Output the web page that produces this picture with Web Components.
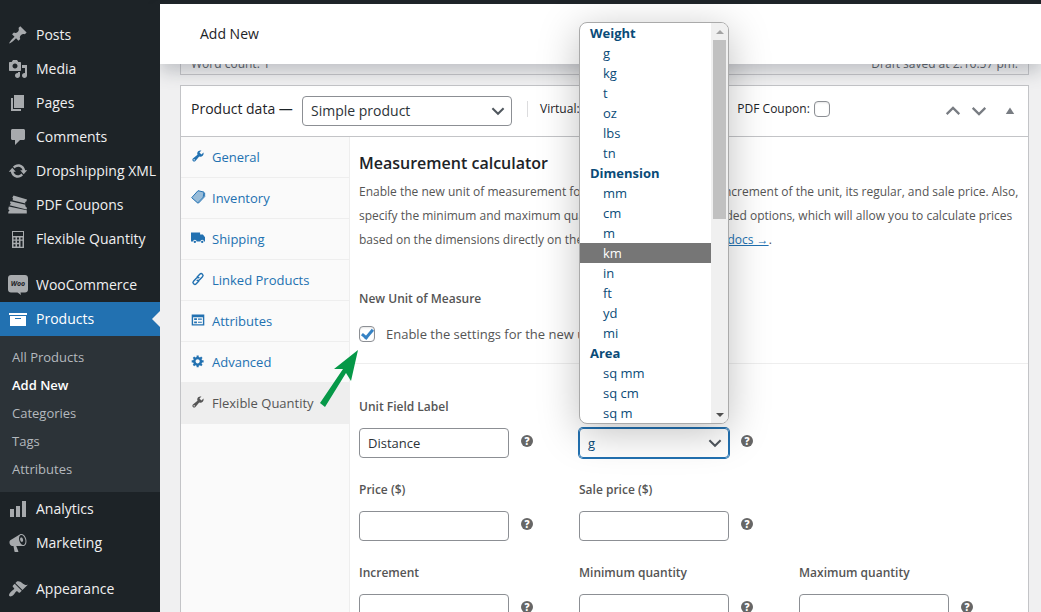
<!DOCTYPE html>
<html lang="en">
<head>
<meta charset="utf-8">
<meta name="viewport" content="width=device-width, initial-scale=1">
<title>Add New product</title>
<style>
body {
    margin: 0;
    overflow: hidden;
    background: #f0f0f1;
    color: #1d2327;
    font: 14px/20px "Open Sans", "Noto Sans", sans-serif;
}
</style>
</head>
<body>

<admin-shell>
    <admin-menu slot="menu">
        <menu-item icon="post">Posts</menu-item>
        <menu-item icon="media">Media</menu-item>
        <menu-item icon="page">Pages</menu-item>
        <menu-item icon="comment">Comments</menu-item>
        <menu-item icon="update">Dropshipping XML</menu-item>
        <menu-item icon="coupons">PDF Coupons</menu-item>
        <menu-item icon="calculator">Flexible Quantity</menu-item>
        <menu-item icon="woo" spaced>WooCommerce</menu-item>
        <menu-item icon="archive" current>Products</menu-item>
        <sub-menu>
            <sub-item>All Products</sub-item>
            <sub-item current>Add New</sub-item>
            <sub-item>Categories</sub-item>
            <sub-item>Tags</sub-item>
            <sub-item>Attributes</sub-item>
        </sub-menu>
        <menu-item icon="chart">Analytics</menu-item>
        <menu-item icon="megaphone">Marketing</menu-item>
        <menu-item icon="brush" spaced>Appearance</menu-item>
    </admin-menu>

    <page-header slot="header">Add New</page-header>

    <editor-status>
        <span>Word count: 1</span>
        <span slot="saved">Draft saved at 2:16:57 pm.</span>
    </editor-status>

    <product-data>
        <data-tab slot="tabs" icon="wrench">General</data-tab>
        <data-tab slot="tabs" icon="tag">Inventory</data-tab>
        <data-tab slot="tabs" icon="truck">Shipping</data-tab>
        <data-tab slot="tabs" icon="link">Linked Products</data-tab>
        <data-tab slot="tabs" icon="list">Attributes</data-tab>
        <data-tab slot="tabs" icon="gear">Advanced</data-tab>
        <data-tab slot="tabs" icon="wrench" current>Flexible Quantity</data-tab>

        <measure-intro></measure-intro>
        <field-grid>
            <text-field label="Unit Field Label" value="Distance"></text-field>
            <unit-field label="Unit of Measure"></unit-field>
            <span></span>
            <text-field label="Price ($)"></text-field>
            <text-field label="Sale price ($)"></text-field>
            <span></span>
            <text-field label="Increment"></text-field>
            <text-field label="Minimum quantity"></text-field>
            <text-field label="Maximum quantity"></text-field>
        </field-grid>
    </product-data>
</admin-shell>

<script>
//all icons sit on a 20x20 grid
const ICONS = {
    post: '<path d="M10.44 3.02l1.82-1.82 6.36 6.35-1.83 1.82c-1.05-.68-2.48-.57-3.41.36l-.75.75c-.92.93-1.04 2.35-.35 3.41l-1.83 1.82-2.41-2.41-2.8 2.79c-.42.42-3.38 2.71-3.8 2.29s1.86-3.39 2.28-3.81l2.79-2.79L4.1 9.36l1.83-1.82c1.05.69 2.48.57 3.4-.36l.75-.75c.93-.92 1.05-2.35.36-3.41z"/>',
    media: '<path d="M13 11V4c0-.55-.45-1-1-1h-1.67L9 1H5L3.67 3H2c-.55 0-1 .45-1 1v7c0 .55.45 1 1 1h10c.55 0 1-.45 1-1zM7 4.5c1.38 0 2.5 1.12 2.5 2.5S8.38 9.5 7 9.5 4.5 8.38 4.5 7 5.62 4.5 7 4.5zM14 6h5v10.5c0 1.38-1.12 2.5-2.5 2.5S14 17.88 14 16.5s1.12-2.5 2.5-2.5c.17 0 .34.02.5.05V9h-3V6zm-4 8.05V13h2v3.5c0 1.38-1.12 2.5-2.5 2.5S7 17.88 7 16.5 8.12 14 9.5 14c.17 0 .34.02.5.05z"/>',
    page: '<path d="M6 15V2h10v13H6zm-1 1h8v2H3V5h2v11z"/>',
    comment: '<path d="M4.5 2h11c.8 0 1.5.7 1.5 1.5v8c0 .8-.7 1.5-1.5 1.5H12l-5 5v-5H4.5C3.700 13 3 12.300 3 11.500v-8C3 2.700 3.700 2 4.500 2z"/>',
    update: '<path d="M10.200 3.280c3.530 0 6.430 2.610 6.920 6h2.080l-3.500 4-3.500-4h2.320c-.450-1.970-2.210-3.450-4.320-3.450-1.450 0-2.730.710-3.540 1.780L4.950 5.660C6.230 4.200 8.110 3.280 10.200 3.280zm-.400 13.440c-3.520 0-6.430-2.610-6.920-6H.800l3.500-4 3.500 4H5.480c.450 1.970 2.210 3.450 4.320 3.450 1.450 0 2.730-.710 3.540-1.780l1.710 1.950c-1.280 1.460-3.150 2.380-5.250 2.380z"/>',
    coupons: '<path d="M5.500.500l13.500 4-.7 2-1.200.400.300 1.600L4.500 5.200l.6-1.500-.800-.900zM2.500 6.200l15 3.500-.3 1.300 1.800 2-.5 1.500L1.500 10.200l1.300-1.500-.8-1.200zM.800 11.500l18 3.800v3.200H.3v-1.800l1.200-1.200L.3 14.300z"/>',
    calculator: '<path fill-rule="evenodd" d="M4 2h12v17H4zM5 3v4h10V3zM5.500 8.500v2h2v-2zm3.500 0v2h2v-2zm3.500 0v2h2v-2zm-7 3.300v2h2v-2zm3.500 0v2h2v-2zm3.500 0v6h2v-6zm-7 3.500v2.200h2v-2.200zm3.500 0v2.200h2v-2.200z"/>',
    woo: '<path d="M3 0h14c1.700 0 3 1.300 3 3v11.500c0 1.700-1.300 3-3 3h-4.500l.5 2.500-3.500-2.500H3c-1.700 0-3-1.300-3-3V3c0-1.700 1.300-3 3-3z"/><text x="10" y="11" text-anchor="middle" font-size="7" font-weight="700" font-style="italic" fill="#1d2327">Woo</text>',
    archive: '<path d="M19 4v2H1V4h18zM2 7h16v10H2V7zm11 3V9H7v1h6z"/>',
    chart: '<path d="M18 18V2h-4v16h4zm-6 0V7H8v11h4zm-6 0v-8H2v8h4z"/>',
    megaphone: '<path d="M18.15 5.94c.46 1.62.38 3.22-.02 4.48-.42 1.28-1.26 2.18-2.3 2.48-.16.06-.26.06-.4.06-.06.02-.12.02-.18.02-.06.02-.14.02-.22.02h-6.8l2.22 5.5c.02.14-.06.26-.14.34-.08.1-.24.16-.34.16H6.95c-.1 0-.26-.06-.34-.16-.08-.08-.16-.2-.14-.34l-1-5.5H4.25l-.02-.02c-.5.06-1.08-.18-1.54-.62s-.88-1.08-1.06-1.88c-.24-.8-.2-1.56-.02-2.2.18-.62.58-1.08 1.06-1.3l.02-.02 9-5.4c.1-.06.18-.1.24-.16.06-.04.14-.08.24-.12.16-.08.28-.12.5-.18 1.04-.3 2.24.1 3.22.98s1.84 2.24 2.26 3.86zm-2.58 5.98h-.02c.4-.1.74-.34 1.04-.7.58-.7.86-1.76.86-3.04 0-.64-.1-1.3-.28-1.98-.34-1.36-1.02-2.5-1.78-3.24s-1.68-1.1-2.46-.88c-.82.22-1.4.96-1.7 2-.32 1.04-.28 2.36.06 3.72.38 1.36 1 2.5 1.8 3.24.78.74 1.62 1.1 2.48.88zm-2.54-7.52c.22-.04.42-.02.62.04.38.16.76.48 1.02 1s.42 1.2.42 1.78c0 .3-.04.56-.12.8-.18.48-.44.84-.86.94-.34.1-.8-.06-1.14-.4s-.64-.86-.78-1.5c-.18-.62-.12-1.24.02-1.72s.48-.84.82-.94z"/>',
    brush: '<path d="M14.48 11.06L7.41 3.99l1.5-1.5c.5-.56 2.3-.47 3.51.32 1.21.8 1.43 1.28 2.91 2.1 1.18.64 2.45 1.26 4.45.85zm-.71.71L6.7 4.7 4.93 6.47c-.39.39-.39 1.02 0 1.41l1.06 1.06c.39.39.39 1.03 0 1.42-.6.6-1.43 1.11-2.21 1.69-.35.26-.7.53-1.01.84C1.43 14.23.4 16.08 1.4 17.07c.99 1 2.84-.03 4.18-1.36.31-.31.58-.66.85-1.02.57-.78 1.08-1.61 1.69-2.21.39-.39 1.02-.39 1.41 0l1.06 1.06c.39.39 1.02.39 1.41 0z"/>',
    wrench: '<path d="M16.68 9.77c-1.34 1.34-3.3 1.67-4.95.99l-5.41 6.52c-.99.99-2.59.99-3.58 0s-.99-2.59 0-3.57l6.52-5.42c-.68-1.65-.35-3.61.99-4.95 1.28-1.28 3.12-1.62 4.72-1.06l-2.89 2.89 2.82 2.82 2.86-2.87c.53 1.58.18 3.39-1.08 4.65zM3.81 16.21c.4.39 1.04.39 1.43 0 .4-.4.4-1.04 0-1.43-.39-.4-1.03-.4-1.43 0-.39.39-.39 1.03 0 1.43z"/>',
    tag: '<path d="M10 1l8.500 2-1 6L9 18.500 1 11z" opacity=".45"/><path fill="none" stroke="currentColor" stroke-width="1.400" d="M10 1l8.500 2-1 7L9.500 18.500 1 11zM9.500 18.500l1.500 0 8.500-9V4"/>',
    truck: '<path d="M0 2h13v3h4l3 4v6h-1.500a2.500 2.500 0 0 0-5 0H8a2.500 2.500 0 0 0-5 0H0z"/><circle cx="5.500" cy="15.500" r="1.700"/><circle cx="16" cy="15.500" r="1.700"/>',
    link: '<g fill="none" stroke="currentColor" stroke-width="2"><path d="M8.500 7.500l4-4.300c2.600-2.600 6.300 1 3.900 3.600L12 11.300c-1.200 1.200-2.800 1.100-3.900 0"/><path d="M11.500 12.500l-4 4.300c-2.600 2.600-6.300-1-3.900-3.600L8 8.700c1.200-1.200 2.800-1.100 3.900 0"/></g>',
    list: '<path fill-rule="evenodd" d="M1 2h18v16H1zM3 6v10h14V6zM4.500 7.500h4V10h-4zm5.500.5h5.500v1.500H10zM4.500 12h4v2.500h-4zm5.500.5h5.500V14H10z"/>',
    gear: '<path d="M18 12h-2.18c-.17.7-.44 1.35-.81 1.93l1.54 1.54-2.1 2.1-1.54-1.54c-.58.36-1.23.63-1.91.79V19H8v-2.18c-.68-.16-1.33-.43-1.91-.79l-1.54 1.54-2.12-2.12 1.54-1.54c-.36-.58-.63-1.23-.79-1.91H1V9.03h2.17c.16-.7.44-1.35.8-1.94L2.43 5.55l2.1-2.1 1.54 1.54c.58-.37 1.24-.64 1.93-.81V2h3v2.18c.68.16 1.33.43 1.91.79l1.54-1.54 2.12 2.12-1.54 1.54c.36.59.64 1.24.8 1.94H18V12zm-8.5 1.5c1.66 0 3-1.34 3-3s-1.34-3-3-3-3 1.34-3 3 1.34 3 3 3z"/>',
    down: '<path fill="none" stroke="currentColor" stroke-width="2.500" d="M3 6.500l7 7 7-7"/>',
    up: '<path fill="none" stroke="currentColor" stroke-width="2.500" d="M3 13.500l7-7 7 7"/>',
    triangle: '<path d="M10 4l7 11H3z"/>'
};

const UNITS = {
    Weight: ["g", "kg", "t", "oz", "lbs", "tn"],
    Dimension: ["mm", "cm", "m", "km", "in", "ft", "yd", "mi"],
    Area: ["sq mm", "sq cm", "sq m"]
};

//tick boxes and form controls look the same in every component
const CONTROLS = `
    input, select, button { font: inherit; color: inherit; margin: 0; box-sizing: border-box; }
    input[type=checkbox] {
        appearance: none; flex: none; width: 16px; height: 16px;
        border: 1px solid #8c8f94; border-radius: 4px; background: #fff;
        box-shadow: inset 0 1px 2px rgba(0,0,0,.1);
    }
    .box {
        display: block; width: 100%; height: 30px; padding: 0 8px;
        border: 1px solid #8c8f94; border-radius: 4px; background: #fff; color: #2c3338;
    }
    .pick { display: grid; align-items: center; position: relative; }
    .pick > * { grid-area: 1 / 1; }
    .pick select { appearance: none; }
    .pick dash-icon { justify-self: end; margin-right: 6px; pointer-events: none; color: #50575e; }
    .help {
        flex: none; width: 12px; height: 12px; padding: 0; border: 0; border-radius: 50%;
        background: #666; color: #fff; font-size: 10px; line-height: 12px; font-weight: 800;
    }
`;

//base class: clones the markup of the component into an open shadow root
class BaseElement extends HTMLElement {
    constructor(){
        super();
        this.attachShadow({mode:"open"});
    }

    connectedCallback(){
        const template = document.createElement("template");
        template.innerHTML = this.render();
        this.shadowRoot.replaceChildren(template.content.cloneNode(true));
    }
}

class DashIcon extends BaseElement {
    render(){
        const size = this.getAttribute("size") || 20;
        return `
        <style>
            :host { display: block; flex: none; }
            svg { display: block; fill: currentColor; overflow: visible; }
        </style>
        <svg width="${size}" height="${size}" viewBox="0 0 20 20" aria-hidden="true">${ICONS[this.getAttribute("name")]}</svg>`;
    }
}
customElements.define("dash-icon", DashIcon);

class AdminShell extends BaseElement {
    render(){
        return `
        <style>
            :host { display: flex; flex-direction: column; height: 100vh; overflow: hidden; }
            .bar { flex: none; height: 4px; background: #1d2327; }
            .columns { flex: 1; min-height: 0; display: grid; grid-template-columns: 160px minmax(0, 1fr); }
            main { padding: 0 12px 0 20px; }
        </style>
        <div class="bar"></div>
        <div class="columns">
            <slot name="menu"></slot>
            <div>
                <slot name="header"></slot>
                <main><slot></slot></main>
            </div>
        </div>`;
    }
}
customElements.define("admin-shell", AdminShell);

class AdminMenu extends BaseElement {
    render(){
        return `
        <style>
            :host { display: block; position: relative; z-index: 2; background: #1d2327; }
            nav { display: flex; flex-direction: column; padding-top: 14px; }
        </style>
        <nav><slot></slot></nav>`;
    }
}
customElements.define("admin-menu", AdminMenu);

class MenuItem extends BaseElement {
    render(){
        return `
        <style>
            :host { display: block; }
            :host([spaced]) { margin-top: 12px; }
            a {
                display: flex; align-items: center; gap: 8px; height: 34px; padding-left: 8px;
                color: #f0f0f1; text-decoration: none; white-space: nowrap; line-height: 20px;
            }
            dash-icon { color: #a7aaad; }
            :host([current]) a { background: #2271b1; color: #fff; }
            :host([current]) dash-icon { color: #fff; }
            :host([current]) a::after {
                content: ""; margin-left: auto;
                border: 8px solid transparent; border-left: 0; border-right-color: #f0f0f1;
            }
        </style>
        <a href="#"><dash-icon name="${this.getAttribute("icon")}"></dash-icon><slot></slot></a>`;
    }
}
customElements.define("menu-item", MenuItem);

class SubMenu extends BaseElement {
    render(){
        return `
        <style>
            :host { display: block; padding: 7px 0 9px; background: #2c3338; font-size: 13px; }
        </style>
        <slot></slot>`;
    }
}
customElements.define("sub-menu", SubMenu);

class SubItem extends BaseElement {
    render(){
        return `
        <style>
            :host { display: block; }
            a { display: block; padding-left: 12px; line-height: 28px; color: #b4b9be; text-decoration: none; }
            :host([current]) a { color: #fff; font-weight: 600; }
        </style>
        <a href="#"><slot></slot></a>`;
    }
}
customElements.define("sub-item", SubItem);

class PageHeader extends BaseElement {
    render(){
        return `
        <style>
            :host {
                display: flex; align-items: center; position: relative; z-index: 1;
                height: 60px; padding: 0 40px; background: #fff;
                box-shadow: 0 8px 16px rgba(85,93,102,.3);
            }
            h1 { margin: 0; font-size: 14px; line-height: 20px; font-weight: 500; }
        </style>
        <h1><slot></slot></h1>`;
    }
}
customElements.define("page-header", PageHeader);

//footer of the text editor, scrolled half way under the header
class EditorStatus extends BaseElement {
    render(){
        return `
        <style>
            :host {
                display: flex; justify-content: space-between; margin: -10px 0 10px;
                padding: 0 10px; border: 1px solid #c3c4c7; border-top: 0;
                font-size: 12px; color: #50575e;
            }
        </style>
        <slot></slot><slot name="saved"></slot>`;
    }
}
customElements.define("editor-status", EditorStatus);

class ProductData extends BaseElement {
    render(){
        return `
        <style>
            ${CONTROLS}
            :host { display: block; border: 1px solid #c3c4c7; background: #fff; }
            header {
                display: flex; align-items: center; height: 50px; padding: 0 12px 0 10px;
                border-bottom: 1px solid #c3c4c7; white-space: nowrap;
            }
            h2 { margin: 0 0 4px; width: 111px; font-size: 14px; line-height: 20px; font-weight: 500; }
            .pick { width: 210px; }
            .types {
                display: flex; gap: 17px; margin: 0 0 4px 15px; padding-left: 12px;
                border-left: 1px solid #dcdcde; font-size: 12px; line-height: 16px; font-weight: 500;
            }
            .types label { display: flex; align-items: center; gap: 4px; }
            .order { display: flex; align-items: center; gap: 8px; margin-left: auto; }
            button { border: 0; padding: 0; background: none; color: #787c82; }
            .toggle { margin-left: 8px; }
            .body { display: grid; grid-template-columns: 169px minmax(0, 1fr); }
            .tabs { border-right: 1px solid #eee; background: #fafafa; }
            .panel { padding: 16px 10px 40px 9px; color: #555; }
        </style>
        <header>
            <h2>Product data —</h2>
            <div class="pick">
                <select class="box" aria-label="Product type"><option>Simple product</option></select>
                <dash-icon name="down" size="16"></dash-icon>
            </div>
            <div class="types">
                <label>Virtual: <input type="checkbox"></label>
                <label>Downloadable: <input type="checkbox"></label>
                <label>PDF Coupon: <input type="checkbox"></label>
            </div>
            <div class="order">
                <button aria-label="Move up"><dash-icon name="up" size="18"></dash-icon></button>
                <button aria-label="Move down"><dash-icon name="down" size="18"></dash-icon></button>
                <button class="toggle" aria-label="Toggle panel"><dash-icon name="triangle" size="12"></dash-icon></button>
            </div>
        </header>
        <div class="body">
            <div class="tabs"><slot name="tabs"></slot></div>
            <div class="panel"><slot></slot></div>
        </div>`;
    }
}
customElements.define("product-data", ProductData);

class DataTab extends BaseElement {
    render(){
        return `
        <style>
            :host { display: block; font-size: 13px; }
            a {
                display: flex; gap: 7px; padding: 10px; border-bottom: 1px solid #eee;
                color: #2271b1; text-decoration: none; line-height: 20px; white-space: nowrap;
            }
            dash-icon { margin-top: 2px; }
            :host([current]) a { background: #eee; color: #555; }
        </style>
        <a href="#"><dash-icon name="${this.getAttribute("icon")}" size="14"></dash-icon><slot></slot></a>`;
    }
}
customElements.define("data-tab", DataTab);

class MeasureIntro extends BaseElement {
    render(){
        return `
        <style>
            ${CONTROLS}
            :host { display: block; margin: 0 -10px 0 -9px; padding: 0 10px 20px 9px; border-bottom: 1px solid #eee; }
            h3 { margin: 0 0 7px; font-size: 16px; line-height: 20px; font-weight: 600; color: #1d2327; }
            p { margin: 0; font-size: 12px; line-height: 24px; white-space: nowrap; }
            a { color: #2271b1; }
            h4 { margin: 37px 0 16px; font-size: 12px; line-height: 20px; font-weight: 600; }
            .enable { display: flex; align-items: center; gap: 11px; position: relative; font-size: 13px; line-height: 18px; }
            .enable input { display: grid; place-items: center; }
            .enable input::before {
                content: ""; width: 4px; height: 9px; margin-bottom: 3px;
                border: solid #3582c4; border-width: 0 3px 3px 0; transform: rotate(40deg);
            }
            /* hint arrow pointing at the tick box */
            .arrow { position: absolute; top: 25px; left: -41px; fill: #069848; }
        </style>
        <h3>Measurement calculator</h3>
        <p>Enable the new unit of measurement for these products. Set the increment of the unit, its regular, and sale price. Also,<br>
        specify the minimum and maximum quantity. Then activate extended options, which will allow you to calculate prices<br>
        based on the dimensions directly on the product. See the plugin<a href="#">'s docs →</a>.</p>
        <h4>New Unit of Measure</h4>
        <div class="enable">
            <input type="checkbox" id="enable" checked>
            <label for="enable">Enable the settings for the new unit of measure</label>
            <svg class="arrow" width="42" height="60" viewBox="0 0 42 60" aria-hidden="true"><path d="M40 0L16 19l9 0L2 53l5 4L28 23l5 8z"/></svg>
        </div>`;
    }
}
customElements.define("measure-intro", MeasureIntro);

class FieldGrid extends BaseElement {
    render(){
        return `
        <style>
            :host {
                display: grid; grid-template-columns: repeat(3, 220px);
                row-gap: 22px; padding-top: 33px;
            }
        </style>
        <slot></slot>`;
    }
}
customElements.define("field-grid", FieldGrid);

const FIELD = `
    :host { display: block; font-size: 13px; }
    .name { display: block; margin-bottom: 11px; font-size: 12px; line-height: 20px; font-weight: 600; }
    .row { display: flex; align-items: center; gap: 12px; }
    .row > :first-child { width: 150px; }
    .help { margin-bottom: 4px; }
`;

class TextField extends BaseElement {
    render(){
        return `
        <style>${CONTROLS}${FIELD}</style>
        <label class="name" for="field">${this.getAttribute("label")}</label>
        <div class="row">
            <input class="box" id="field" value="${this.getAttribute("value") || ""}">
            <button class="help" aria-label="Help">?</button>
        </div>`;
    }
}
customElements.define("text-field", TextField);

//drop-down with its list open above it
class UnitField extends BaseElement {
    render(){
        const groups = Object.entries(UNITS);
        return `
        <style>
            ${CONTROLS}${FIELD}
            .box { border-color: #2271b1; box-shadow: 0 0 0 1px #2271b1; color: #0a4b78; background: transparent; }
            .list {
                position: absolute; z-index: 3; bottom: calc(100% + 4px); left: 0; right: 0;
                display: flex; overflow: hidden; border: 1px solid #aaa; border-radius: 8px;
                background: #fff; color: #0a4b78; line-height: 20px;
                box-shadow: 0 8px 40px rgba(0,0,0,.25);
            }
            ul { flex: 1; margin: 0; padding: 0; list-style: none; }
            li { padding-left: 23px; }
            li.group { padding-left: 10px; font-weight: 700; }
            li[aria-selected] { background: #767676; color: #fff; }
            .scroll { display: flex; flex-direction: column; align-items: center; width: 17px; background: #f0f0f0; }
            .scroll::before, .scroll::after { content: ""; margin: 7px 0 6px; border: 4px solid transparent; }
            .scroll::before { border-top: 0; border-bottom-color: #a3a3a3; }
            .scroll::after { margin-top: auto; border-bottom: 0; border-top-color: #505050; }
            .thumb { width: 13px; height: 179px; background: #c1c1c1; }
        </style>
        <label class="name" for="unit">${this.getAttribute("label")}</label>
        <div class="row">
            <div class="pick">
                <select class="box" id="unit">
                    ${groups.map(([name, units]) => `<optgroup label="${name}">${units.map(u => `<option>${u}</option>`).join("")}</optgroup>`).join("")}
                </select>
                <dash-icon name="down" size="16"></dash-icon>
                <div class="list">
                    <ul role="listbox" aria-label="Units">
                        ${groups.map(([name, units]) => `<li class="group" role="presentation">${name}</li>` +
                            units.map(u => `<li role="option"${u === "km" ? ' aria-selected="true"' : ""}>${u}</li>`).join("")).join("")}
                    </ul>
                    <div class="scroll"><div class="thumb"></div></div>
                </div>
            </div>
            <button class="help" aria-label="Help">?</button>
        </div>`;
    }
}
customElements.define("unit-field", UnitField);
</script>
</body>
</html>
